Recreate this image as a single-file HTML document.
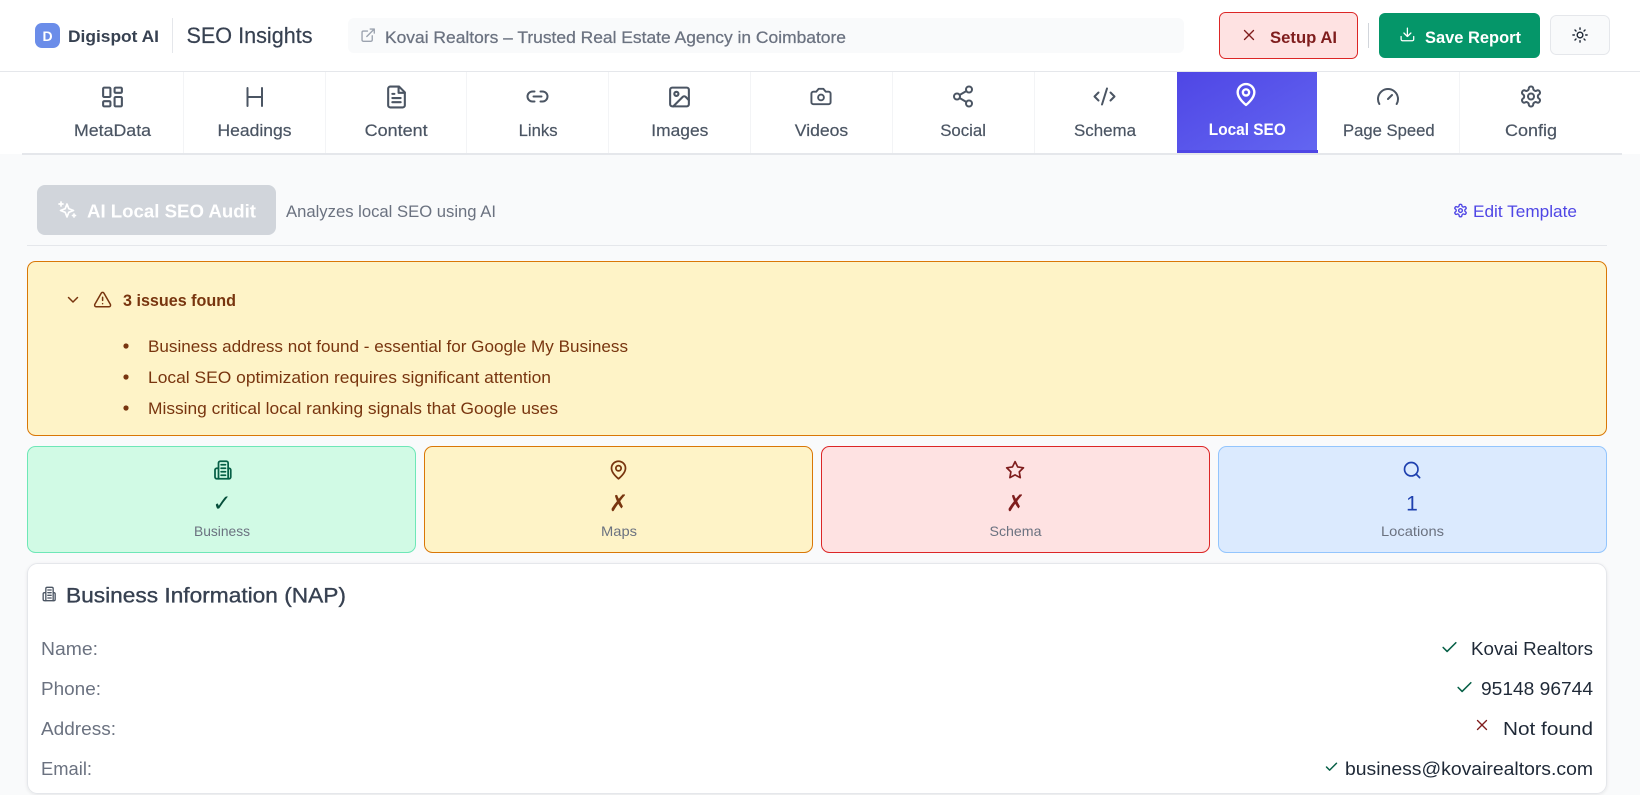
<!DOCTYPE html>
<html lang="en">
<head>
<meta charset="utf-8">
<title>SEO Insights</title>
<style>
html,body{margin:0;padding:0;width:1640px;height:795px;overflow:hidden;background:#f9fafb}
svg{display:block}
text{font-family:"Liberation Sans",sans-serif;white-space:pre}
.i{fill:none;stroke-linecap:round;stroke-linejoin:round}
.tab{font-size:17px;fill:#4b5563;stroke:#4b5563;stroke-width:.2}
.ti{stroke:#4b5563;stroke-width:2}
.sl{font-size:14px;fill:#6b7280}
.lb{font-size:18px;fill:#6b7280}
.vl{font-size:18px;fill:#1f2937}
.al{font-size:16.5px;fill:#78350f}
</style>
</head>
<body>
<svg xmlns="http://www.w3.org/2000/svg" width="1640" height="795" viewBox="0 0 1640 795">
<defs>
<linearGradient id="act" x1="0" y1="0" x2="1" y2="1"><stop offset="0" stop-color="#4f46e5"/><stop offset="1" stop-color="#6366f1"/></linearGradient>
<filter id="sh" x="-2%" y="-5%" width="104%" height="110%"><feDropShadow dx="0" dy="1" stdDeviation="1.5" flood-color="#000" flood-opacity=".08"/></filter>
<symbol id="s-dash" viewBox="0 0 24 24"><rect x="3" y="3" width="7" height="9" rx="1"/><rect x="14" y="3" width="7" height="5" rx="1"/><rect x="14" y="12" width="7" height="9" rx="1"/><rect x="3" y="16" width="7" height="5" rx="1"/></symbol>
<symbol id="s-file" viewBox="0 0 24 24"><path d="M14.5 2H6a2 2 0 0 0-2 2v16a2 2 0 0 0 2 2h12a2 2 0 0 0 2-2V7.5L14.5 2z"/><path d="M14 2v6h6M16 13H8M16 17H8M10 9H8"/></symbol>
<symbol id="s-link" viewBox="0 0 24 24"><path d="M9 17H7A5 5 0 0 1 7 7h2M15 7h2a5 5 0 1 1 0 10h-2M8 12h8"/></symbol>
<symbol id="s-img" viewBox="0 0 24 24"><rect x="3" y="3" width="18" height="18" rx="2"/><circle cx="9" cy="9" r="2"/><path d="m21 15-3.086-3.086a2 2 0 0 0-2.828 0L6 21"/></symbol>
<symbol id="s-cam" viewBox="0 0 24 24"><path d="M14.5 4h-5L7 7H4a2 2 0 0 0-2 2v9a2 2 0 0 0 2 2h16a2 2 0 0 0 2-2V9a2 2 0 0 0-2-2h-3l-2.500-3z"/><circle cx="12" cy="13" r="3"/></symbol>
<symbol id="s-share" viewBox="0 0 24 24"><circle cx="18" cy="5" r="3"/><circle cx="6" cy="12" r="3"/><circle cx="18" cy="19" r="3"/><path d="M8.59 13.51 15.42 17.49M15.41 6.51 8.59 10.49"/></symbol>
<symbol id="s-code" viewBox="0 0 24 24"><path d="m18 16 4-4-4-4M6 8l-4 4 4 4M14.500 4l-5 16"/></symbol>
<symbol id="s-pin" viewBox="0 0 24 24"><path d="M20 10c0 6-8 12-8 12s-8-6-8-12a8 8 0 0 1 16 0Z"/><circle cx="12" cy="10" r="3"/></symbol>
<symbol id="s-gauge" viewBox="0 0 24 24"><path d="m12 14 4-4M3.340 19a10 10 0 1 1 17.320 0"/></symbol>
<symbol id="s-gear" viewBox="0 0 24 24"><path d="M12.220 2h-.44a2 2 0 0 0-2 2v.18a2 2 0 0 1-1 1.730l-.43.25a2 2 0 0 1-2 0l-.15-.08a2 2 0 0 0-2.730.73l-.22.38a2 2 0 0 0 .73 2.730l.15.1a2 2 0 0 1 1 1.720v.51a2 2 0 0 1-1 1.740l-.15.09a2 2 0 0 0-.73 2.730l.22.38a2 2 0 0 0 2.730.73l.15-.08a2 2 0 0 1 2 0l.43.25a2 2 0 0 1 1 1.730V20a2 2 0 0 0 2 2h.44a2 2 0 0 0 2-2v-.18a2 2 0 0 1 1-1.730l.43-.25a2 2 0 0 1 2 0l.15.08a2 2 0 0 0 2.730-.73l.22-.39a2 2 0 0 0-.73-2.730l-.15-.08a2 2 0 0 1-1-1.740v-.5a2 2 0 0 1 1-1.740l.15-.09a2 2 0 0 0 .73-2.730l-.22-.38a2 2 0 0 0-2.730-.73l-.15.08a2 2 0 0 1-2 0l-.43-.25a2 2 0 0 1-1-1.730V4a2 2 0 0 0-2-2z"/><circle cx="12" cy="12" r="3"/></symbol>
<symbol id="s-bld" viewBox="0 0 24 24"><path d="M8 22V4a2 2 0 0 1 2-2h7a2 2 0 0 1 2 2v18"/><path d="M8 10H6a2 2 0 0 0-2 2v8a2 2 0 0 0 2 2h14a2 2 0 0 0 2-2v-8a2 2 0 0 0-2-2h-1"/><path d="M11 6h5M11 10h5M11 14h5M11 18h5"/></symbol>
<symbol id="s-x" viewBox="0 0 24 24"><path d="M18 6 6 18M6 6l12 12"/></symbol>
<symbol id="s-check" viewBox="0 0 24 24"><path d="M20 6 9 17l-5-5"/></symbol>
</defs>

<!-- page -->
<rect width="1640" height="795" fill="#f9fafb"/>

<!-- header -->
<rect width="1640" height="154" fill="#fff"/>
<rect x="35" y="23" width="25" height="25" rx="7" fill="#6b8de9"/>
<text x="47.500" y="41" text-anchor="middle" font-size="14" font-weight="700" fill="#fff">D</text>
<text x="68" y="42" font-size="17" font-weight="700" fill="#374151" textLength="91" lengthAdjust="spacingAndGlyphs">Digispot AI</text>
<rect x="172" y="18" width="1" height="35" fill="#e5e7eb"/>
<text x="186.500" y="43" font-size="22" fill="#374151" stroke="#374151" stroke-width=".2" textLength="126" lengthAdjust="spacingAndGlyphs">SEO Insights</text>

<rect x="348" y="18" width="836" height="35" rx="6" fill="#f9fafb"/>
<g class="i" stroke="#9ca3af" stroke-width="2" transform="translate(360 27) scale(.68)"><path d="M15 3h6v6M10 14 21 3M18 13v6a2 2 0 0 1-2 2H5a2 2 0 0 1-2-2V8a2 2 0 0 1 2-2h6"/></g>
<text x="385" y="43" font-size="17" fill="#6b7280" stroke="#6b7280" stroke-width=".25" textLength="461" lengthAdjust="spacingAndGlyphs">Kovai Realtors – Trusted Real Estate Agency in Coimbatore</text>

<rect x="1219.500" y="12.500" width="138" height="46" rx="6" fill="#fee2e2" stroke="#dc2626"/>
<use href="#s-x" class="i" x="1240" y="26" width="18" height="18" stroke="#7f1d1d" stroke-width="1.800"/>
<text x="1270" y="43" font-size="17" font-weight="700" fill="#7f1d1d" textLength="67" lengthAdjust="spacingAndGlyphs">Setup AI</text>
<rect x="1368" y="23" width="1" height="25" fill="#d1d5db"/>

<rect x="1379" y="13" width="161" height="45" rx="6" fill="#059669"/>
<g class="i" stroke="#fff" stroke-width="1.800" transform="translate(1399 26) scale(.7)"><path d="M21 15v4a2 2 0 0 1-2 2H5a2 2 0 0 1-2-2v-4M7 10l5 5 5-5M12 15V3"/></g>
<text x="1425" y="43" font-size="17" font-weight="700" fill="#fff" textLength="96" lengthAdjust="spacingAndGlyphs">Save Report</text>

<rect x="1550.500" y="15.500" width="59" height="39" rx="6" fill="#f9fafb" stroke="#e5e7eb"/>
<g class="i" stroke="#1f2937" stroke-width="2" transform="translate(1571.500 26.500) scale(.71)"><circle cx="12" cy="12" r="4"/><path d="M12 2v2M12 20v2M4.930 4.930l1.410 1.410M17.660 17.660l1.410 1.410M2 12h2M20 12h2M6.340 17.660l-1.410 1.410M19.070 4.930l-1.410 1.410"/></g>

<!-- tabs -->
<rect y="71" width="1640" height="1" fill="#e5e7eb"/>
<rect x="22" y="153" width="1600" height="2" fill="#e5e7eb"/>
<g fill="#f3f4f6">
<rect x="183" y="72" width="1" height="81"/><rect x="325" y="72" width="1" height="81"/><rect x="466" y="72" width="1" height="81"/><rect x="608" y="72" width="1" height="81"/><rect x="750" y="72" width="1" height="81"/><rect x="892" y="72" width="1" height="81"/><rect x="1034" y="72" width="1" height="81"/><rect x="1459" y="72" width="1" height="81"/>
</g>
<rect x="1177" y="72" width="140" height="81" fill="url(#act)"/>
<rect x="1177" y="150" width="141" height="3" fill="#4f46e5"/>

<use href="#s-dash" class="i ti" x="100" y="84.500" width="25" height="25"/>
<path class="i ti" stroke-width="1.600" d="M247.500 88v18M262 88v18M247.500 97h14.500"/>
<use href="#s-file" class="i ti" x="384" y="84.500" width="25" height="25"/>
<use href="#s-link" class="i ti" x="525.500" y="84.500" width="24" height="24"/>
<use href="#s-img" class="i ti" x="667" y="84.500" width="25" height="25"/>
<use href="#s-cam" class="i ti" x="809.500" y="85" width="23" height="23"/>
<use href="#s-share" class="i ti" x="951" y="84.500" width="24" height="24"/>
<use href="#s-code" class="i ti" x="1092.500" y="84.500" width="24" height="24"/>
<use href="#s-pin" class="i" stroke="#fff" stroke-width="2.300" x="1233.500" y="82" width="25" height="25"/>
<use href="#s-gauge" class="i ti" x="1376" y="85" width="24" height="24"/>
<use href="#s-gear" class="i ti" x="1519" y="84.500" width="24" height="24"/>

<text class="tab" x="74" y="136" textLength="77" lengthAdjust="spacingAndGlyphs">MetaData</text>
<text class="tab" x="217.500" y="136" textLength="74" lengthAdjust="spacingAndGlyphs">Headings</text>
<text class="tab" x="364.600" y="136" textLength="63" lengthAdjust="spacingAndGlyphs">Content</text>
<text class="tab" x="518.600" y="136" textLength="39" lengthAdjust="spacingAndGlyphs">Links</text>
<text class="tab" x="651.300" y="136" textLength="57" lengthAdjust="spacingAndGlyphs">Images</text>
<text class="tab" x="794.800" y="136" textLength="53.400" lengthAdjust="spacingAndGlyphs">Videos</text>
<text class="tab" x="940.200" y="136" textLength="45.800" lengthAdjust="spacingAndGlyphs">Social</text>
<text class="tab" x="1074" y="136" textLength="62" lengthAdjust="spacingAndGlyphs">Schema</text>
<text x="1208.800" y="135" font-size="17" font-weight="700" fill="#fff" textLength="77" lengthAdjust="spacingAndGlyphs">Local SEO</text>
<text class="tab" x="1343" y="136" textLength="91.600" lengthAdjust="spacingAndGlyphs">Page Speed</text>
<text class="tab" x="1505" y="136" textLength="52" lengthAdjust="spacingAndGlyphs">Config</text>

<!-- toolbar -->
<rect x="37" y="185" width="239" height="50" rx="8" fill="#d1d5db"/>
<g class="i" stroke="#fff" stroke-width="1.700">
<path d="M67 204l1.800 4.700 4.700 1.800-4.700 1.800-1.800 4.700-1.800-4.700-4.700-1.800 4.700-1.800z"/>
<path d="M61 202v4M59 204h4M74 214v3M72.500 215.500h3"/>
</g>
<text x="87" y="217.500" font-size="18.500" font-weight="700" fill="#fff" textLength="169" lengthAdjust="spacingAndGlyphs">AI Local SEO Audit</text>
<text x="286" y="217" font-size="16.500" fill="#6b7280" textLength="210" lengthAdjust="spacingAndGlyphs">Analyzes local SEO using AI</text>
<use href="#s-gear" class="i" stroke="#4f46e5" stroke-width="2.200" x="1453" y="203" width="15" height="15"/>
<text x="1473" y="217" font-size="17" fill="#4f46e5" textLength="104" lengthAdjust="spacingAndGlyphs">Edit Template</text>
<rect x="27" y="245" width="1580" height="1" fill="#e5e7eb"/>

<!-- alert -->
<rect x="27.500" y="261.500" width="1579" height="174" rx="8" fill="#fef3c7" stroke="#d97706"/>
<path class="i" stroke="#78350f" stroke-width="1.500" d="M68.500 297.500l4.500 4.500 4.500-4.500"/>
<g class="i" stroke="#78350f" stroke-width="1.900" transform="translate(93 290) scale(.8)"><path d="M21.730 18l-8-14a2 2 0 0 0-3.480 0l-8 14A2 2 0 0 0 4 21h16a2 2 0 0 0 1.730-3ZM12 9v4M12 17h.01"/></g>
<text x="123" y="306" font-size="16.500" font-weight="700" fill="#78350f" textLength="113" lengthAdjust="spacingAndGlyphs">3 issues found</text>
<circle cx="126" cy="346" r="2.600" fill="#78350f"/>
<circle cx="126" cy="377" r="2.600" fill="#78350f"/>
<circle cx="126" cy="408" r="2.600" fill="#78350f"/>
<text class="al" x="148" y="352" textLength="480" lengthAdjust="spacingAndGlyphs">Business address not found - essential for Google My Business</text>
<text class="al" x="148" y="383" textLength="403" lengthAdjust="spacingAndGlyphs">Local SEO optimization requires significant attention</text>
<text class="al" x="148" y="414" textLength="410" lengthAdjust="spacingAndGlyphs">Missing critical local ranking signals that Google uses</text>

<!-- stats -->
<rect x="27.500" y="446.500" width="388" height="106" rx="8" fill="#d1fae5" stroke="#6ee7b7"/>
<rect x="424.500" y="446.500" width="388" height="106" rx="8" fill="#fef3c7" stroke="#d97706"/>
<rect x="821.500" y="446.500" width="388" height="106" rx="8" fill="#fee2e2" stroke="#dc2626"/>
<rect x="1218.500" y="446.500" width="388" height="106" rx="8" fill="#dbeafe" stroke="#93c5fd"/>

<use href="#s-bld" class="i" stroke="#065f46" stroke-width="2" x="211.500" y="459.500" width="21" height="21"/>
<use href="#s-pin" class="i" stroke="#78350f" stroke-width="2" x="608" y="459.500" width="21" height="21"/>
<g class="i" stroke="#7f1d1d" stroke-width="2" transform="translate(1005 460) scale(.84)"><path d="M12 2 15.090 8.260 22 9.270 17 14.140 18.180 21.020 12 17.770 5.820 21.020 7 14.140 2 9.270 8.910 8.260Z"/></g>
<g class="i" stroke="#1e40af" stroke-width="2" transform="translate(1402 460) scale(.84)"><circle cx="11" cy="11" r="8"/><path d="m21 21-4.300-4.300"/></g>

<text x="222" y="511" text-anchor="middle" font-size="23" fill="#064e3b" style="font-family:'DejaVu Sans',sans-serif">✓</text>
<text x="618.500" y="511" text-anchor="middle" font-size="23" fill="#78350f" style="font-family:'DejaVu Sans',sans-serif">✗</text>
<text x="1015.500" y="511" text-anchor="middle" font-size="23" fill="#7f1d1d" style="font-family:'DejaVu Sans',sans-serif">✗</text>
<text x="1412" y="510.500" text-anchor="middle" font-size="21" fill="#1e40af">1</text>

<text class="sl" x="194" y="536" textLength="56" lengthAdjust="spacingAndGlyphs">Business</text>
<text class="sl" x="601" y="536" textLength="36" lengthAdjust="spacingAndGlyphs">Maps</text>
<text class="sl" x="989.500" y="536" textLength="52" lengthAdjust="spacingAndGlyphs">Schema</text>
<text class="sl" x="1381" y="536" textLength="63" lengthAdjust="spacingAndGlyphs">Locations</text>

<!-- NAP card -->
<rect x="27.500" y="563.500" width="1579" height="230" rx="10" fill="#fff" stroke="#e5e7eb" filter="url(#sh)"/>
<use href="#s-bld" class="i" stroke="#4b5563" stroke-width="2" x="40.500" y="586" width="16" height="16"/>
<text x="66" y="602.500" font-size="21" fill="#374151" stroke="#374151" stroke-width=".35" textLength="280" lengthAdjust="spacingAndGlyphs">Business Information (NAP)</text>

<text class="lb" x="41" y="655" textLength="57" lengthAdjust="spacingAndGlyphs">Name:</text>
<text class="lb" x="41" y="695" textLength="60" lengthAdjust="spacingAndGlyphs">Phone:</text>
<text class="lb" x="41" y="735" textLength="75" lengthAdjust="spacingAndGlyphs">Address:</text>
<text class="lb" x="41" y="775" textLength="51" lengthAdjust="spacingAndGlyphs">Email:</text>

<use href="#s-check" class="i" stroke="#065f46" stroke-width="2" x="1440" y="638" width="19" height="19"/>
<text class="vl" x="1471" y="655" textLength="122" lengthAdjust="spacingAndGlyphs">Kovai Realtors</text>
<use href="#s-check" class="i" stroke="#065f46" stroke-width="2" x="1455" y="678" width="19" height="19"/>
<text class="vl" x="1481" y="695" textLength="112" lengthAdjust="spacingAndGlyphs">95148 96744</text>
<use href="#s-x" class="i" stroke="#7f1d1d" stroke-width="1.800" x="1473" y="716" width="18" height="18"/>
<text class="vl" x="1503" y="735" textLength="90" lengthAdjust="spacingAndGlyphs">Not found</text>
<use href="#s-check" class="i" stroke="#065f46" stroke-width="2.400" x="1324" y="759.500" width="15" height="15"/>
<text class="vl" x="1345" y="775" textLength="248" lengthAdjust="spacingAndGlyphs">business@kovairealtors.com</text>
</svg>
</body>
</html>
